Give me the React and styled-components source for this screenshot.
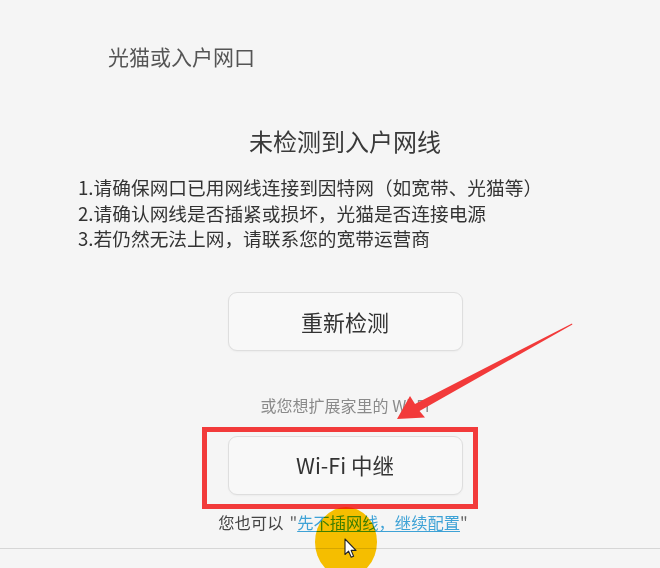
import React from "react";
import styled, { createGlobalStyle } from "styled-components";

const Global = createGlobalStyle`
  html, body { margin: 0; padding: 0; background: #f5f5f5; }
  body { font-family: "Noto Sans CJK SC", "Noto Sans", sans-serif; }
`;

const Page = styled.div`
  position: relative;
  width: 660px;
  height: 568px;
  overflow: hidden;
  background: #f5f5f5;
  padding-top: 42px;
  box-sizing: border-box;
  display: flex;
  flex-direction: column;
`;

const SectionLabel = styled.div`
  padding-left: 108px;
  font-size: 21px;
  line-height: 28px;
  color: #555;
`;

const Content = styled.div`
  margin-left: 78px;
  width: 534px;
  display: flex;
  flex-direction: column;
  align-items: center;
`;

const Title = styled.h1`
  margin: 55px 0 0;
  font-size: 24px;
  font-weight: 400;
  line-height: 32px;
  color: #3a3a3a;
`;

const Tips = styled.ol`
  list-style: none;
  margin: 17px 0 0;
  padding: 0;
  align-self: stretch;
  font-size: 18.7px;
  line-height: 25.5px;
  color: #333;
  white-space: nowrap;
`;

const Tip = styled.li`
  margin: 0;
`;

const Button = styled.button`
  width: 235px;
  height: 59px;
  box-sizing: border-box;
  border: 1px solid #dedede;
  border-radius: 9px;
  background: #f8f8f8;
  box-shadow: 0 1px 2px rgba(0, 0, 0, 0.04);
  font-family: inherit;
  font-size: ${(p) => p.$size || 22}px;
  color: #333;
  padding: 0 0 2px;
  cursor: pointer;
`;

const ButtonSlot = styled.div`
  position: relative;
  margin-top: ${(p) => p.$top}px;
  display: flex;
`;

const Highlight = styled.div`
  position: absolute;
  left: -26px;
  right: -15px;
  top: -9px;
  bottom: -14px;
  border: 5px solid #f23a3a;
  pointer-events: none;
`;

const Hint = styled.div`
  margin-top: 44px;
  font-size: 16px;
  line-height: 20px;
  color: #8a8a8a;
`;

const Footer = styled.div`
  margin-top: 16px;
  font-size: 16.3px;
  line-height: 22px;
  color: #444;
  padding-right: 4px;
`;

const Quote = styled.span`
  color: #666;
  margin-left: ${(p) => p.$gap || 0}px;
`;

const Link = styled.a`
  color: #3ea2d6;
  text-decoration: underline;
  text-underline-offset: 2px;
`;

const Divider = styled.hr`
  margin: 15px 0 0;
  border: 0;
  height: 1px;
  background: #d6d6d6;
  width: 100%;
`;

const Overlay = styled.svg`
  position: absolute;
  left: 0;
  top: 0;
  width: 660px;
  height: 568px;
  pointer-events: none;
`;

const ClickSpot = styled.div`
  position: absolute;
  left: 315px;
  top: 507px;
  width: 62px;
  height: 70px;
  border-radius: 50%;
  background: #ffc600;
  mix-blend-mode: multiply;
  pointer-events: none;
`;

const Cursor = styled.svg`
  position: absolute;
  left: 344px;
  top: 538px;
  width: 14px;
  height: 21px;
  pointer-events: none;
`;

export default function App() {
  return (
    <>
      <Global />
      <Page>
        <SectionLabel>光猫或入户网口</SectionLabel>
        <Content>
          <Title>未检测到入户网线</Title>
          <Tips>
            <Tip>1.请确保网口已用网线连接到因特网（如宽带、光猫等）</Tip>
            <Tip>2.请确认网线是否插紧或损坏，光猫是否连接电源</Tip>
            <Tip>3.若仍然无法上网，请联系您的宽带运营商</Tip>
          </Tips>
          <ButtonSlot $top={41.5}>
            <Button>重新检测</Button>
          </ButtonSlot>
          <Hint>或您想扩展家里的 Wi-Fi</Hint>
          <ButtonSlot $top={21}>
            <Button $size={21.5}>Wi-Fi 中继</Button>
            <Highlight />
          </ButtonSlot>
          <Footer>
            您也可以<Quote $gap={6}>"</Quote>
            <Link>先不插网线，继续配置</Link>
            <Quote>"</Quote>
          </Footer>
        </Content>
        <Divider />
        <Overlay viewBox="0 0 660 568">
          <polygon
            points="397,419 410,396 415,404 572,323.4 572.4,324.4 419.5,411 425,417.5"
            fill="#f23a3a"
          />
        </Overlay>
        <ClickSpot />
        <Cursor viewBox="0 0 14 21">
          <path
            d="M1 1 L1 16.5 L4.6 13.2 L7.2 19.2 L9.6 18.2 L7.1 12.4 L12 12.4 Z"
            fill="#fff"
            stroke="#222"
            strokeWidth="1.1"
            strokeLinejoin="round"
          />
        </Cursor>
      </Page>
    </>
  );
}
